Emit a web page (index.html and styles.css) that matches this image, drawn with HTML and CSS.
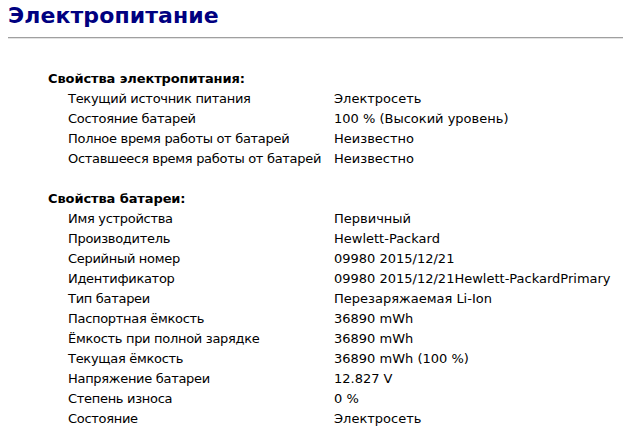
FILE: index.html
```html
<!DOCTYPE html>
<html lang="ru">
<head>
<meta charset="utf-8">
<title>Электропитание</title>
<link rel="stylesheet" href="styles.css">
</head>
<body>
<h1 class="title">Электропитание</h1>
<hr class="rule">
<div class="content">
  <section class="group">
    <h2 class="group-title">Свойства электропитания:</h2>
    <div class="row"><span class="label">Текущий источник питания</span><span class="value">Электросеть</span></div>
    <div class="row"><span class="label">Состояние батарей</span><span class="value">100 % (Высокий уровень)</span></div>
    <div class="row"><span class="label">Полное время работы от батарей</span><span class="value">Неизвестно</span></div>
    <div class="row"><span class="label">Оставшееся время работы от батарей</span><span class="value">Неизвестно</span></div>
  </section>
  <section class="group">
    <h2 class="group-title">Свойства батареи:</h2>
    <div class="row"><span class="label">Имя устройства</span><span class="value">Первичный</span></div>
    <div class="row"><span class="label">Производитель</span><span class="value">Hewlett-Packard</span></div>
    <div class="row"><span class="label">Серийный номер</span><span class="value">09980 2015/12/21</span></div>
    <div class="row"><span class="label">Идентификатор</span><span class="value">09980 2015/12/21Hewlett-PackardPrimary</span></div>
    <div class="row"><span class="label">Тип батареи</span><span class="value">Перезаряжаемая Li-Ion</span></div>
    <div class="row"><span class="label">Паспортная ёмкость</span><span class="value">36890 mWh</span></div>
    <div class="row"><span class="label">Ёмкость при полной зарядке</span><span class="value">36890 mWh</span></div>
    <div class="row"><span class="label">Текущая ёмкость</span><span class="value">36890 mWh (100 %)</span></div>
    <div class="row"><span class="label">Напряжение батареи</span><span class="value">12.827 V</span></div>
    <div class="row"><span class="label">Степень износа</span><span class="value">0 %</span></div>
    <div class="row"><span class="label">Состояние</span><span class="value">Электросеть</span></div>
  </section>
</div>
</body>
</html>
```
FILE: styles.css
```css
html, body {
  margin: 0;
  padding: 0;
  background: #ffffff;
  overflow: hidden;
}
body {
  padding: 0 0 0 8px;
  font-family: "DejaVu Sans", Verdana, sans-serif;
  font-size: 13px;
  color: #000000;
}
.title {
  margin: 0;
  padding-top: 1px;
  font-size: 22px;
  line-height: 30px;
  font-weight: bold;
  letter-spacing: 0.1px;
  color: #000080;
}
.rule {
  margin: 6px 0 0 0;
  height: 0;
  border: 0;
  border-top: 1px solid #a0a0a0;
  border-bottom: 1px solid #e3e3e3;
}
.content {
  padding: 30px 0 0 40px;
}
.group {
  margin-bottom: 20px;
}
.group-title {
  margin: 0;
  font-size: 13px;
  line-height: 20px;
  font-weight: bold;
  letter-spacing: -0.1px;
}
.row {
  display: flex;
  line-height: 20px;
  padding-left: 20px;
}
.label {
  width: 266px;
  flex: none;
  letter-spacing: -0.3px;
}
.value {
  white-space: nowrap;
}
```
